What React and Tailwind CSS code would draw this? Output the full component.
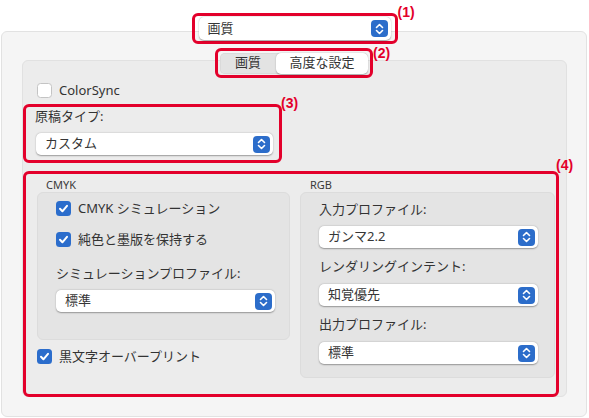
import React from 'react'

// blue up/down stepper on the right end of a popup button
function Stepper({ size = 'w-[17px] h-[17px]' }) {
  return (
    <span className={`${size} rounded-[4px] bg-[#2c6dca] flex items-center justify-center shrink-0`}>
      <svg width="9" height="12" viewBox="0 0 9 12" fill="none" stroke="white" strokeWidth="1.6" strokeLinecap="round" strokeLinejoin="round">
        <path d="M1.5 4.5 L4.5 1.5 L7.5 4.5" />
        <path d="M1.5 7.5 L4.5 10.5 L7.5 7.5" />
      </svg>
    </span>
  )
}

function Popup({ value, className = '' }) {
  return (
    <div className={`h-[22px] bg-white rounded-[5px] shadow-[0_0.5px_1.5px_rgba(0,0,0,0.35)] flex items-center justify-between pl-[9px] pr-[3px] text-[13px] text-[#363636] ${className}`}>
      <span>{value}</span>
      <Stepper />
    </div>
  )
}

function Check({ checked = true, label, className = '' }) {
  return (
    <div className={`flex items-center gap-[7px] h-[15px] ${className}`}>
      {checked ? (
        <span className="w-[15px] h-[15px] rounded-[3.5px] bg-[#2b6dcc] flex items-center justify-center">
          <svg width="11" height="11" viewBox="0 0 11 11" fill="none" stroke="white" strokeWidth="2" strokeLinecap="round" strokeLinejoin="round">
            <path d="M2 5.8 L4.4 8.3 L9 2.8" />
          </svg>
        </span>
      ) : (
        <span className="w-[15px] h-[15px] rounded-[3.5px] bg-white border border-[#c4c4c4]" />
      )}
      <span className="text-[13px] text-[#333] leading-none">{label}</span>
    </div>
  )
}

// red callout frame with its number tag
function Callout({ n, className = '', tag = '', children }) {
  return (
    <div className={`relative border-[3px] border-[#e3002b] rounded-[6px] ${className}`}>
      {children}
      <span className={`absolute left-full text-[14px] font-bold text-[#e3002b] font-['Liberation_Sans',sans-serif] leading-none ${tag}`}>
        {n}
      </span>
    </div>
  )
}

export default function App() {
  return (
    <div className="w-[589px] h-[418px] bg-white overflow-hidden font-['Noto_Sans','Noto_Sans_CJK_JP',sans-serif] text-[#333]">
      {/* preset popup */}
      <div className="flex justify-center pt-[13px] relative z-10">
        <Callout n="(1)" className="w-[206px] h-[31px] px-[4px] flex items-center" tag="ml-[3px] top-[-11px]">
          <Popup value="画質" className="w-full h-[23px]" />
        </Callout>
      </div>

      <div className="ml-[1px] -mt-[13px] w-[586px] h-[386px] bg-[#f5f5f5] border border-[#e2e2e2] rounded-[6px] pt-[16px]">
        {/* tabs */}
        <div className="flex justify-center relative z-10">
          <Callout n="(2)" className="w-[158px] h-[30px] px-[2px] flex items-center" tag="ml-[3px] top-[-5px]">
            <div className="flex w-full h-[21px] rounded-[5px] bg-[#e3e3e3] text-[13px] text-[#333] shadow-[inset_0_0_0_0.5px_rgba(0,0,0,0.08)]">
              <div className="w-[56px] flex items-center justify-center">画質</div>
              <div className="flex-1 flex items-center justify-center bg-white rounded-[5px] shadow-[0_0.5px_1.5px_rgba(0,0,0,0.3)]">高度な設定</div>
            </div>
          </Callout>
        </div>

        <div className="ml-[20px] -mt-[18px] w-[545px] h-[337px] bg-[#ececec] border border-[#e1e1e1] rounded-[6px]">
          <Check checked={false} label="ColorSync" className="ml-[14px] mt-[22px]" />

          <Callout n="(3)" className="w-[259px] h-[59px] mt-[6px] pl-[9px] pt-[1px]" tag="ml-[2px] top-[-11px]">
            <div className="text-[13px] leading-[16px]">原稿タイプ:</div>
            <Popup value="カスタム" className="w-[237px] ml-[1px] mt-[9px]" />
          </Callout>

          <Callout n="(4)" className="w-[536px] h-[226px] mt-[8px] pl-[11px] flex gap-[10px]" tag="ml-[0px] top-[-16px]">
            <div className="w-[253px]">
              <div className="text-[11px] leading-[14px] pl-[9px] pt-[4px] text-[#3a3a3a]">CMYK</div>
              <div className="h-[148px] bg-[#e4e4e4] border border-[#dcdcdc] rounded-[6px] pl-[18px] pt-[8px]">
                <Check label="CMYK シミュレーション" />
                <Check label="純色と墨版を保持する" className="mt-[16px]" />
                <div className="text-[13px] leading-[16px] mt-[18px]">シミュレーションプロファイル:</div>
                <Popup value="標準" className="w-[219px] mt-[9px]" />
              </div>
              <Check label="黒文字オーバープリント" className="mt-[9px]" />
            </div>

            <div className="w-[255px]">
              <div className="text-[11px] leading-[14px] pl-[10px] pt-[4px] text-[#3a3a3a]">RGB</div>
              <div className="h-[186px] bg-[#e4e4e4] border border-[#dcdcdc] rounded-[6px] pl-[18px] pt-[8px]">
                <div className="text-[13px] leading-[16px]">入力プロファイル:</div>
                <Popup value="ガンマ2.2" className="w-[219px] mt-[9px]" />
                <div className="text-[13px] leading-[16px] mt-[10px]">レンダリングインテント:</div>
                <Popup value="知覚優先" className="w-[219px] mt-[10px]" />
                <div className="text-[13px] leading-[16px] mt-[10px]">出力プロファイル:</div>
                <Popup value="標準" className="w-[219px] mt-[10px]" />
              </div>
            </div>
          </Callout>
        </div>
      </div>
    </div>
  )
}
